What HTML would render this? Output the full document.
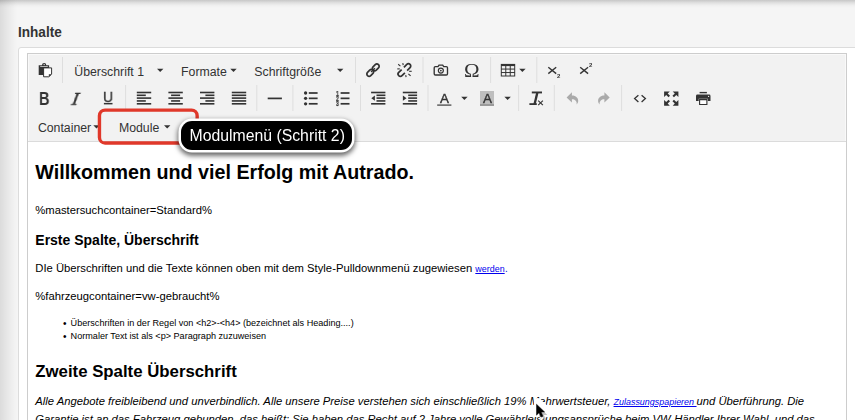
<!DOCTYPE html>
<html lang="de">
<head>
<meta charset="utf-8">
<title>Inhalte</title>
<style>
*{box-sizing:border-box;margin:0;padding:0}
html,body{width:855px;height:420px;overflow:hidden}
body{background:#f5f5f5;font-family:"Liberation Sans",sans-serif;position:relative;color:#333}
.topshade{position:absolute;left:0;top:0;width:855px;height:8px;background:linear-gradient(rgba(0,0,0,.19),rgba(0,0,0,.085) 35%,rgba(0,0,0,.025) 68%,rgba(0,0,0,0))}
.leftshade{position:absolute;left:0;top:0;width:17px;height:420px;background:linear-gradient(90deg,rgba(0,0,0,.105),rgba(0,0,0,.07) 30%,rgba(0,0,0,.035) 62%,rgba(0,0,0,0))}
.label{position:absolute;left:18px;top:24.4px;font-weight:bold;font-size:14.6px;line-height:16px;color:#333;transform:scaleX(.93);transform-origin:0 0}
.outer{position:absolute;left:18px;top:47px;width:850px;height:400px;background:#fff;border:1px solid #dcdcdc;border-radius:3px}
.editor{position:absolute;left:27px;top:53px;width:820px;height:380px;border:1px solid #cdcdcd;background:#fff}
.toolbar{position:absolute;left:0;top:0;width:818px;height:88px;background:#f2f2f2;border-bottom:1px solid #dbdbdb;box-shadow:inset 1px 1px 0 #f9f9f9,inset -1px 0 0 #f9f9f9}
.tb{position:absolute;font-size:12.3px;line-height:16px;color:#333;white-space:nowrap}
.gl{position:absolute;color:#333;white-space:nowrap;line-height:1;will-change:transform}
.content{position:absolute;left:0;top:89px;width:819px;height:300px;color:#000}
.content *{position:absolute;white-space:nowrap}
h1{left:7.3px;top:16.5px;font-size:19.7px;line-height:24px;font-weight:bold}
.p{font-size:11.25px;line-height:14px}
h2{font-size:14px;line-height:18px;font-weight:bold}
h2.big{font-size:16.8px;line-height:20px}
.li{font-size:9.1px;line-height:12px}
a{color:#0000ee;text-decoration:underline}
.content a{position:static;font-size:8.95px}
.content .dot{position:static;color:#2222dd}
.content .bl{position:absolute;font-size:10px;line-height:12px;left:-7.7px;top:0.5px}
.red{position:absolute;left:98px;top:109px;width:101px;height:35.5px;border:2.7px solid #e03d2e;border-radius:7px}
.tip{position:absolute;left:181px;top:120.7px;width:171px;height:29.5px;background:#000;border-radius:11px;box-shadow:0 0 0 2.5px #fff,0 2.5px 5px 3.2px rgba(0,0,0,.6);color:#fff;font-size:15.8px;line-height:29.3px;padding-left:8.5px;white-space:nowrap}
svg.ov{position:absolute;left:0;top:0;width:855px;height:420px;pointer-events:none}
svg text{font-family:"Liberation Sans",sans-serif}
</style>
</head>
<body>
<div class="topshade"></div>
<div class="leftshade"></div>
<div class="label">Inhalte</div>
<div class="outer"></div>
<div class="editor">
 <div class="toolbar"></div>
 <div class="content">
  <h1>Willkommen und viel Erfolg mit Autrado.</h1>
  <div class="p" style="left:7.3px;top:60px">%mastersuchcontainer=Standard%</div>
  <h2 style="left:7.3px;top:88px">Erste Spalte, Überschrift</h2>
  <div class="p" style="left:7.3px;top:118px">DIe Überschriften und die Texte können oben mit dem Style-Pulldownmenü zugewiesen <a>werden</a><span class="dot">.</span></div>
  <div class="p" style="left:7.3px;top:146px">%fahrzeugcontainer=vw-gebraucht%</div>
  <div class="li" style="left:42.6px;top:174px"><span class="bl">•</span>Überschriften in der Regel von &lt;h2&gt;-&lt;h4&gt; (bezeichnet als Heading....)</div>
  <div class="li" style="left:42.6px;top:187px"><span class="bl">•</span>Normaler Text ist als &lt;p&gt; Paragraph zuzuweisen</div>
  <h2 class="big" style="left:7.3px;top:219px">Zweite Spalte Überschrift</h2>
  <div class="p" style="left:7.3px;top:251px;font-style:italic">Alle Angebote freibleibend und unverbindlich. Alle unsere Preise verstehen sich einschließlich 19% Mehrwertsteuer, <a>Zulassungspapieren </a>und Überführung. Die</div>
  <div class="p" style="left:7.3px;top:269px;font-style:italic">Garantie ist an das Fahrzeug gebunden, das heißt: Sie haben das Recht auf 2 Jahre volle Gewährleistungsansprüche beim VW-Händler Ihrer Wahl, und das</div>
 </div>
</div>

<div class="tb" style="left:74.3px;top:63.6px">Überschrift 1</div>
<div class="tb" style="left:181.1px;top:63.6px">Formate</div>
<div class="tb" style="left:254.3px;top:63.6px">Schriftgröße</div>
<div class="tb" style="left:37.9px;top:120.2px">Container</div>
<div class="tb" style="left:118.9px;top:120.2px">Module</div>

<div style="position:absolute;left:480px;top:91.4px;width:14.3px;height:14.4px;background:linear-gradient(#bebebe 0,#bebebe 12.9px,#9a9a9a 12.9px)"></div>
<div class="gl" style="left:38.9px;top:90px;font-size:18.2px;font-weight:bold;transform:scaleX(.8);transform-origin:0 0">B</div>
<div class="gl" style="left:70.8px;top:90.7px;font-size:17px;font-family:'DejaVu Serif',serif;font-style:italic;font-weight:normal;-webkit-text-stroke:0.4px #333;transform:scaleX(1.05) skewX(-8deg);transform-origin:0 100%">I</div>
<div class="gl" style="left:103.1px;top:89.3px;font-size:15px;-webkit-text-stroke:0.45px #333;transform:scaleX(.93);transform-origin:0 0">U</div>
<div class="gl" style="left:439.5px;top:93.1px;font-size:12.2px;-webkit-text-stroke:0.35px #333;transform:scaleX(1.1);transform-origin:0 0">A</div>
<div class="gl" style="left:482.6px;top:93.1px;font-size:12.2px;-webkit-text-stroke:0.35px #333;transform:scaleX(1.1);transform-origin:0 0">A</div>
<div class="gl" style="left:464.3px;top:60.8px;font-size:19.6px;font-family:'Liberation Serif',serif;transform:scaleX(1.07);transform-origin:0 0">Ω</div>
<div class="gl" style="left:557px;top:72.6px;font-size:6px;font-weight:bold">2</div>
<div class="gl" style="left:589px;top:62.4px;font-size:6px;font-weight:bold">2</div>
<div class="gl" style="left:335.6px;top:91.6px;font-size:6.6px;font-weight:bold;line-height:4.9px;-webkit-text-stroke:0.25px #333;transform:scaleX(.78);transform-origin:0 0">1<br>2<br>3</div>

<svg class="ov" viewBox="0 0 855 420">
<rect x="62.00" y="57.00" width="1.00" height="26.00" fill="#dedede" />
<rect x="355.00" y="57.00" width="1.00" height="26.00" fill="#dedede" />
<rect x="422.50" y="57.00" width="1.00" height="26.00" fill="#dedede" />
<rect x="490.10" y="57.00" width="1.00" height="26.00" fill="#dedede" />
<rect x="536.30" y="57.00" width="1.00" height="26.00" fill="#dedede" />
<rect x="125.10" y="85.00" width="1.00" height="26.00" fill="#dedede" />
<rect x="256.30" y="85.00" width="1.00" height="26.00" fill="#dedede" />
<rect x="292.40" y="85.00" width="1.00" height="26.00" fill="#dedede" />
<rect x="360.00" y="85.00" width="1.00" height="26.00" fill="#dedede" />
<rect x="427.50" y="85.00" width="1.00" height="26.00" fill="#dedede" />
<rect x="518.10" y="85.00" width="1.00" height="26.00" fill="#dedede" />
<rect x="553.80" y="85.00" width="1.00" height="26.00" fill="#dedede" />
<rect x="621.10" y="85.00" width="1.00" height="26.00" fill="#dedede" />
<path d="M157.00 68.75h6.4l-3.20 3.3z" fill="#333" stroke="none" stroke-width="0" />
<path d="M230.30 68.75h6.4l-3.20 3.3z" fill="#333" stroke="none" stroke-width="0" />
<path d="M337.00 68.75h6.4l-3.20 3.3z" fill="#333" stroke="none" stroke-width="0" />
<path d="M519.20 68.75h6.4l-3.20 3.3z" fill="#333" stroke="none" stroke-width="0" />
<path d="M461.20 96.75h6.4l-3.20 3.3z" fill="#333" stroke="none" stroke-width="0" />
<path d="M504.40 96.75h6.4l-3.20 3.3z" fill="#333" stroke="none" stroke-width="0" />
<path d="M93.30 125.15h6.4l-3.20 3.3z" fill="#333" stroke="none" stroke-width="0" />
<path d="M164.00 125.15h6.4l-3.20 3.3z" fill="#333" stroke="none" stroke-width="0" />
<path d="M42.0 65.2 a2.15 2.15 0 0 1 4.3 0 h2.8 v9.7 h-10.4 v-9.7 z" fill="#333" stroke="none" stroke-width="0" />
<circle cx="44.15" cy="64.6" r="0.7" fill="#f2f2f2"/>
<rect x="40.20" y="66.20" width="7.60" height="0.80" fill="#d8d8d8" />
<path d="M43.6 67.9 h8.0 v6.3 l-2.8 2.6 h-5.2 z" fill="#fff" stroke="#333" stroke-width="1" />
<path d="M51.6 74.2 h-2.8 v2.6 z" fill="#333" stroke="none" stroke-width="0" />
<rect x="136.80" y="91.70" width="14.40" height="1.60" fill="#333" />
<rect x="136.80" y="94.50" width="9.00" height="1.60" fill="#333" />
<rect x="136.80" y="97.30" width="14.40" height="1.60" fill="#333" />
<rect x="136.80" y="100.15" width="9.00" height="1.60" fill="#333" />
<rect x="136.80" y="103.00" width="14.40" height="1.60" fill="#333" />
<rect x="168.40" y="91.70" width="14.40" height="1.60" fill="#333" />
<rect x="171.10" y="94.50" width="9.00" height="1.60" fill="#333" />
<rect x="168.40" y="97.30" width="14.40" height="1.60" fill="#333" />
<rect x="171.10" y="100.15" width="9.00" height="1.60" fill="#333" />
<rect x="168.40" y="103.00" width="14.40" height="1.60" fill="#333" />
<rect x="200.00" y="91.70" width="14.40" height="1.60" fill="#333" />
<rect x="205.40" y="94.50" width="9.00" height="1.60" fill="#333" />
<rect x="200.00" y="97.30" width="14.40" height="1.60" fill="#333" />
<rect x="205.40" y="100.15" width="9.00" height="1.60" fill="#333" />
<rect x="200.00" y="103.00" width="14.40" height="1.60" fill="#333" />
<rect x="231.80" y="91.70" width="14.40" height="1.60" fill="#333" />
<rect x="231.80" y="94.50" width="14.40" height="1.60" fill="#333" />
<rect x="231.80" y="97.30" width="14.40" height="1.60" fill="#333" />
<rect x="231.80" y="100.15" width="14.40" height="1.60" fill="#333" />
<rect x="231.80" y="103.00" width="14.40" height="1.60" fill="#333" />
<rect x="267.70" y="97.55" width="14.20" height="1.70" fill="#333" />
<circle cx="305.6" cy="93.0" r="1.65" fill="#333"/>
<rect x="308.80" y="92.15" width="8.80" height="1.70" fill="#333" />
<circle cx="305.6" cy="98.35" r="1.65" fill="#333"/>
<rect x="308.80" y="97.50" width="8.80" height="1.70" fill="#333" />
<circle cx="305.6" cy="103.8" r="1.65" fill="#333"/>
<rect x="308.80" y="102.95" width="8.80" height="1.70" fill="#333" />
<rect x="340.60" y="92.15" width="8.90" height="1.70" fill="#333" />
<rect x="340.60" y="97.50" width="8.90" height="1.70" fill="#333" />
<rect x="340.60" y="102.95" width="8.90" height="1.70" fill="#333" />
<rect x="371.10" y="91.70" width="14.30" height="1.60" fill="#333" />
<rect x="376.50" y="94.50" width="8.90" height="1.60" fill="#333" />
<rect x="376.50" y="97.30" width="8.90" height="1.60" fill="#333" />
<rect x="376.50" y="100.15" width="8.90" height="1.60" fill="#333" />
<rect x="371.10" y="103.00" width="14.30" height="1.60" fill="#333" />
<path d="M374.90 95.6 v5.1 l-3.6 -2.55 z" fill="#333" stroke="none" stroke-width="0" />
<rect x="402.80" y="91.70" width="14.30" height="1.60" fill="#333" />
<rect x="408.20" y="94.50" width="8.90" height="1.60" fill="#333" />
<rect x="408.20" y="97.30" width="8.90" height="1.60" fill="#333" />
<rect x="408.20" y="100.15" width="8.90" height="1.60" fill="#333" />
<rect x="402.80" y="103.00" width="14.30" height="1.60" fill="#333" />
<path d="M402.90 95.6 v5.1 l3.6 -2.55 z" fill="#333" stroke="none" stroke-width="0" />
<rect x="437.20" y="104.40" width="14.20" height="1.40" fill="#555" />
<rect x="531.80" y="91.50" width="10.20" height="1.90" fill="#333" />
<path d="M536.3 92 h2.4 l-2.9 12 h-2.4 z" fill="#333" stroke="none" stroke-width="0" />
<rect x="529.40" y="103.20" width="7.40" height="1.80" fill="#333" />
<line x1="538.20" y1="100.60" x2="542.90" y2="105.20" stroke="#333" stroke-width="1.1" stroke-linecap="butt"/>
<line x1="542.90" y1="100.60" x2="538.20" y2="105.20" stroke="#333" stroke-width="1.1" stroke-linecap="butt"/>
<path d="M5.3 0 V3.3 C9.5 3.3 11.6 6 11.6 8.6 C11.6 10.4 10.8 11.6 9.9 12.3 C10.2 11.3 10.2 10.2 9.6 9.2 C8.8 7.7 7.3 7.1 5.3 7.1 V10.4 L0 5.2 Z" fill="#aaa" transform="translate(566.60 92.2)"/>
<path d="M5.3 0 V3.3 C9.5 3.3 11.6 6 11.6 8.6 C11.6 10.4 10.8 11.6 9.9 12.3 C10.2 11.3 10.2 10.2 9.6 9.2 C8.8 7.7 7.3 7.1 5.3 7.1 V10.4 L0 5.2 Z" fill="#aaa" transform="translate(609.70 92.2) scale(-1 1)"/>
<polyline points="638.4,95.2 634.6,98.5 638.4,101.9" fill="none" stroke="#333" stroke-width="1.3"/>
<polyline points="641.6,95.2 645.4,98.5 641.6,101.9" fill="none" stroke="#333" stroke-width="1.3"/>
<path d="M664.10 91.40 L669.80 91.40 L667.69 93.51 L670.03 95.84 L668.54 97.33 L666.21 94.99 L664.10 97.10 Z" fill="#333" stroke="none" stroke-width="0" />
<path d="M678.40 91.40 L672.70 91.40 L674.81 93.51 L672.47 95.84 L673.96 97.33 L676.29 94.99 L678.40 97.10 Z" fill="#333" stroke="none" stroke-width="0" />
<path d="M664.10 105.70 L669.80 105.70 L667.69 103.59 L670.03 101.26 L668.54 99.77 L666.21 102.11 L664.10 100.00 Z" fill="#333" stroke="none" stroke-width="0" />
<path d="M678.40 105.70 L672.70 105.70 L674.81 103.59 L672.47 101.26 L673.96 99.77 L676.29 102.11 L678.40 100.00 Z" fill="#333" stroke="none" stroke-width="0" />
<rect x="699.60" y="91.90" width="7.30" height="1.40" fill="#333" />
<path d="M697.4 94.6 h11.7 a1.4 1.4 0 0 1 1.4 1.4 v4.9 h-2.7 v-2.2 h-9.1 v2.2 h-2.7 v-4.9 a1.4 1.4 0 0 1 1.4 -1.4 z" fill="#333" stroke="none" stroke-width="0" />
<path d="M699.6 99.6 h7.3 v4.9 h-7.3 z" fill="#fff" stroke="#333" stroke-width="1.1" />
<circle cx="708.6" cy="96.4" r="0.6" fill="#f2f2f2"/>
<g transform="translate(373.00 70.15) rotate(-45)" fill="none" stroke="#333" stroke-width="1.7"><rect x="-7.75" y="-2.3" width="7.7" height="4.6" rx="2.3"/><rect x="0.05" y="-2.3" width="7.7" height="4.6" rx="2.3"/></g>
<line x1="371.10" y1="72.05" x2="374.90" y2="68.25" stroke="#333" stroke-width="1.5" stroke-linecap="butt"/>
<g transform="translate(404.40 70.05) rotate(-45)" fill="none" stroke="#333" stroke-width="1.7"><path d="M-1.6 -2.3 h-4.1 a2.3 2.3 0 0 0 0 4.6 h4.1"/><path d="M1.6 -2.3 h4.1 a2.3 2.3 0 0 1 0 4.6 h-4.1"/></g>
<line x1="398.20" y1="64.30" x2="400.40" y2="66.10" stroke="#333" stroke-width="1.1" stroke-linecap="butt"/>
<line x1="402.80" y1="63.20" x2="403.20" y2="65.20" stroke="#333" stroke-width="1.1" stroke-linecap="butt"/>
<line x1="397.30" y1="68.90" x2="399.80" y2="68.90" stroke="#333" stroke-width="1.1" stroke-linecap="butt"/>
<line x1="408.40" y1="73.80" x2="410.60" y2="75.90" stroke="#333" stroke-width="1.1" stroke-linecap="butt"/>
<line x1="405.70" y1="75.20" x2="406.10" y2="77.20" stroke="#333" stroke-width="1.1" stroke-linecap="butt"/>
<line x1="409.10" y1="71.30" x2="411.70" y2="71.30" stroke="#333" stroke-width="1.1" stroke-linecap="butt"/>
<path d="M435.4 66.6 h2.6 l1 -1.5 h3.7 l1 1.5 h2.6 a1.2 1.2 0 0 1 1.2 1.2 v6 a1.2 1.2 0 0 1 -1.2 1.2 h-10.9 a1.2 1.2 0 0 1 -1.2 -1.2 v-6 a1.2 1.2 0 0 1 1.2 -1.2 z" fill="none" stroke="#333" stroke-width="1.35" />
<circle cx="440.85" cy="70.6" r="2.5" fill="none" stroke="#333" stroke-width="1.2"/>
<circle cx="440.85" cy="70.6" r="0.9" fill="#333"/>
<rect x="500.80" y="63.90" width="14.40" height="12.60" fill="#333" />
<rect x="501.80" y="66.10" width="3.47" height="2.47" fill="#f2f2f2" />
<rect x="506.27" y="66.10" width="3.47" height="2.47" fill="#f2f2f2" />
<rect x="510.74" y="66.10" width="3.47" height="2.47" fill="#f2f2f2" />
<rect x="501.80" y="69.57" width="3.47" height="2.47" fill="#f2f2f2" />
<rect x="506.27" y="69.57" width="3.47" height="2.47" fill="#f2f2f2" />
<rect x="510.74" y="69.57" width="3.47" height="2.47" fill="#f2f2f2" />
<rect x="501.80" y="73.04" width="3.47" height="2.47" fill="#f2f2f2" />
<rect x="506.27" y="73.04" width="3.47" height="2.47" fill="#f2f2f2" />
<rect x="510.74" y="73.04" width="3.47" height="2.47" fill="#f2f2f2" />
<line x1="548.30" y1="67.30" x2="556.20" y2="73.60" stroke="#333" stroke-width="1.35" stroke-linecap="butt"/>
<line x1="556.20" y1="67.30" x2="548.30" y2="73.60" stroke="#333" stroke-width="1.35" stroke-linecap="butt"/>
<line x1="580.20" y1="67.30" x2="588.10" y2="73.60" stroke="#333" stroke-width="1.35" stroke-linecap="butt"/>
<line x1="588.10" y1="67.30" x2="580.20" y2="73.60" stroke="#333" stroke-width="1.35" stroke-linecap="butt"/>
<rect x="103.9" y="102.9" width="8.6" height="1.5" fill="#333"/>
</svg>

<svg class="ov" viewBox="0 0 855 420"><rect x="99.45" y="110.1" width="97.7" height="32.9" rx="5.6" fill="none" stroke="#e0382a" stroke-width="3.4"/></svg>
<div class="tip">Modulmenü (Schritt 2)</div>
<svg class="ov" viewBox="0 0 855 420">
<defs><filter id="cb" x="-50%" y="-50%" width="200%" height="200%"><feGaussianBlur stdDeviation="0.9"/></filter></defs>
<g transform="translate(535.9 403.6) scale(0.62)">
<path d="M1 1 V18.6 L5.1 14.7 L8.2 21.8 L11.4 20.4 L8.4 13.5 H14 Z" fill="#fff" stroke="#fff" stroke-width="12.5" stroke-linejoin="round" transform="translate(2.2 -3.6)" filter="url(#cb)"/>
<path d="M1 1 V18.6 L5.1 14.7 L8.2 21.8 L11.4 20.4 L8.4 13.5 H14 Z" fill="#777" opacity=".45" transform="translate(4.5 5)" filter="url(#cb)"/>
<path d="M1 1 V18.6 L5.1 14.7 L8.2 21.8 L11.4 20.4 L8.4 13.5 H14 Z" fill="#000" stroke="#000" stroke-width="0.8" stroke-linejoin="round"/>
</g>
</svg>
</body>
</html>
